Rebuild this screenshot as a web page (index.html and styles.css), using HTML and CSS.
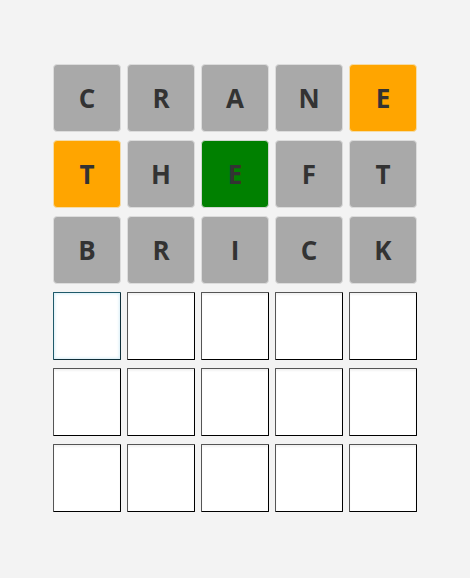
FILE: index.html
```html
<!DOCTYPE html>
<html>
<head>
<meta charset="utf-8">
<link rel="stylesheet" href="styles.css">
</head>
<body>
<div class="board">
  <div class="row">
    <div class="tile absent">C</div>
    <div class="tile absent">R</div>
    <div class="tile absent">A</div>
    <div class="tile absent">N</div>
    <div class="tile present">E</div>
  </div>
  <div class="row">
    <div class="tile present">T</div>
    <div class="tile absent">H</div>
    <div class="tile correct">E</div>
    <div class="tile absent">F</div>
    <div class="tile absent">T</div>
  </div>
  <div class="row">
    <div class="tile absent">B</div>
    <div class="tile absent">R</div>
    <div class="tile absent">I</div>
    <div class="tile absent">C</div>
    <div class="tile absent">K</div>
  </div>
  <div class="row">
    <div class="tile empty focus"></div>
    <div class="tile empty"></div>
    <div class="tile empty"></div>
    <div class="tile empty"></div>
    <div class="tile empty"></div>
  </div>
  <div class="row">
    <div class="tile empty"></div>
    <div class="tile empty"></div>
    <div class="tile empty"></div>
    <div class="tile empty"></div>
    <div class="tile empty"></div>
  </div>
  <div class="row">
    <div class="tile empty"></div>
    <div class="tile empty"></div>
    <div class="tile empty"></div>
    <div class="tile empty"></div>
    <div class="tile empty"></div>
  </div>
</div>
</body>
</html>
```
FILE: styles.css
```css
html, body {
  margin: 0;
  padding: 0;
  background: #f3f3f3;
  width: 470px;
  height: 578px;
}
body {
  font-family: "Open Sans", "Noto Sans", sans-serif;
}
.board {
  display: flex;
  flex-direction: column;
  align-items: center;
  gap: 8px;
  padding-top: 64px;
}
.row {
  display: flex;
  gap: 6px;
}
.tile {
  box-sizing: border-box;
  width: 68px;
  height: 68px;
  display: flex;
  align-items: center;
  justify-content: center;
  font-size: 26px;
  font-weight: 700;
  color: #333;
  border-radius: 4px;
  border: 1px solid #dcdcdc;
}
.absent { background: #a9a9a9; }
.present { background: #ffa500; border-color: #f5dca8; }
.correct { background: #008000; border-color: #cfd8cf; }
.empty {
  background: #fff;
  border-radius: 1px;
  border: 1px solid #000;
  border-color: #555 #000 #000 #555;
  box-shadow: inset 0 2px 2px rgba(0,0,0,0.05);
}
.empty.focus {
  border-color: #1f5a6a #10303a #10303a #1f5a6a;
  box-shadow: inset 0 0 3px 1px #d8eef7;
}
```
